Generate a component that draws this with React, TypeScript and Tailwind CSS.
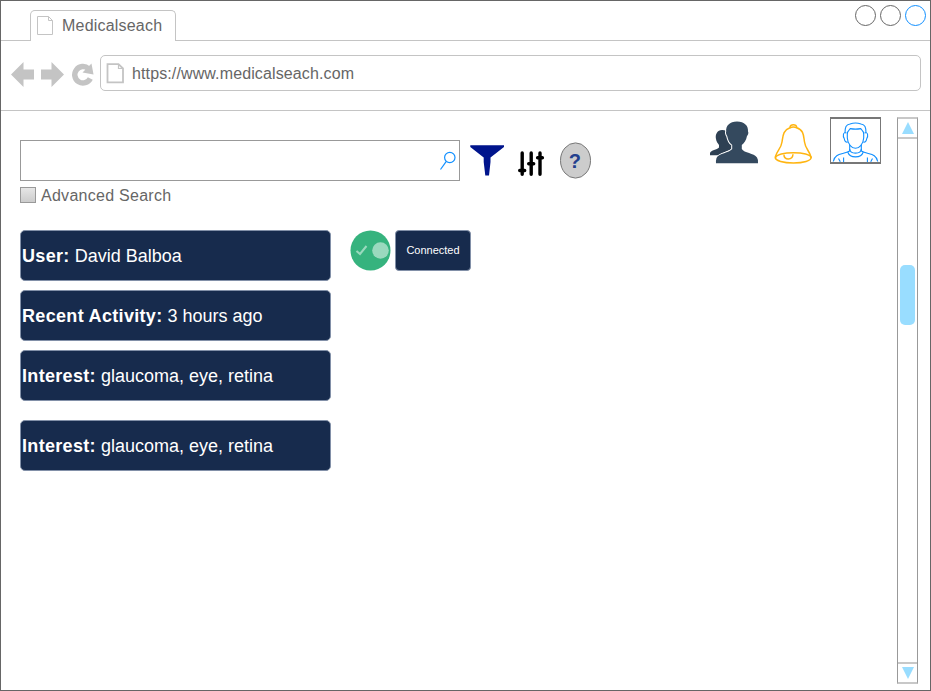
import React from "react";

function PageIcon({ thick = false }: { thick?: boolean }) {
  return thick ? (
    <svg className="h-[21px] w-[19px] shrink-0" viewBox="0 0 19 21" fill="none" stroke="#c4c4c4" strokeWidth="1.8">
      <path d="M1.5 1.2H12.5L17 5.5V19.3H1.5Z" />
      <path d="M12.5 1.2V5.5H17" strokeWidth="1.2" />
    </svg>
  ) : (
    <svg className="h-[20px] w-[17px] shrink-0" viewBox="0 0 17 20" fill="none" stroke="#c4c4c4">
      <path d="M.5 .5H11.5L15.5 4.5V18.5H.5Z" />
      <path d="M11.5 .5V4.5H15.5" />
    </svg>
  );
}

function TabBar() {
  return (
    <div className="flex h-[40px] items-end">
      <div className="w-[29px] shrink-0 border-b border-[#c4c4c4]" />
      <div className="flex h-[31px] w-[146px] shrink-0 items-center rounded-t-[5px] border border-b-0 border-[#c4c4c4] pl-[6px]">
        <PageIcon />
        <span className="ml-[8px] text-[16px] leading-5 tracking-[0.2px]">Medicalseach</span>
      </div>
      <div className="flex h-full flex-1 justify-end border-b border-[#c4c4c4] pr-[3px]">
        <svg className="mt-[3px] h-[23px] w-[73px]" viewBox="0 0 73 23" fill="none" stroke="#666">
          <circle cx="11.5" cy="11.5" r="10" />
          <circle cx="36.5" cy="11.5" r="10" />
          <circle cx="61.5" cy="11.5" r="10" stroke="#108fff" />
        </svg>
      </div>
    </div>
  );
}

function Toolbar() {
  return (
    <div className="flex h-[70px] border-b border-[#c4c4c4] pt-[14px] pr-[9px] pl-[10px]">
      <svg className="mt-[6px] h-[28px] w-[89px] shrink-0" viewBox="11 61 89 28" fill="#c4c4c4">
        <path d="M11 74.5L23.5 62V69.5H34V79.5H23.5V87Z" />
        <path d="M64 74.5L51.5 62V69.5H41V79.5H51.5V87Z" />
        <path d="M88.5 68.7A8.2 8.2 0 1 0 90.3 78.5" fill="none" stroke="#c4c4c4" strokeWidth="5.5" />
        <path d="M91.5 63.5L93.5 74.5L82.5 72.5Z" />
      </svg>
      <div className="flex h-[36px] flex-1 items-center rounded-[5px] border border-[#c4c4c4] pl-[5px]">
        <PageIcon thick />
        <span className="mt-[2px] ml-[7px] text-[16px] leading-5 tracking-[0.12px]">https://www.medicalseach.com</span>
      </div>
    </div>
  );
}

function SearchTools() {
  return (
    <div className="flex">
      <div className="flex h-[41px] w-[440px] items-center justify-end border border-[#999]">
        <svg className="mr-[2px] h-[20px] w-[18px]" viewBox="0 0 18 20" fill="none" stroke="#108fff" strokeWidth="1.2">
          <circle cx="10.8" cy="6.5" r="5.2" />
          <path d="M7.3 10.4L1.5 18.5" />
        </svg>
      </div>
      <svg className="ml-[9px] h-[41px] w-[124px]" viewBox="469 140 124 41">
        <path d="M470.3 145.3H504V147L490.5 157.5V162L489 175.5H485.3L483.7 162V157.5L470.3 147Z" fill="#00148c" />
        <g stroke="#000" strokeWidth="3.4" strokeLinecap="round">
          <path d="M522.2 153V174.3M531.2 153V174.3M540 153V174.3" />
          <path d="M519.7 170.5H524.7M528.7 163.8H533.7M537.6 157.8H542.4" />
        </g>
        <ellipse cx="575.5" cy="160.5" rx="15" ry="17.6" fill="#ccc" stroke="#777" />
        <text x="574.8" y="167.5" textAnchor="middle" fill="#23408e" fontSize="20" fontWeight="700">?</text>
      </svg>
    </div>
  );
}

function AccountIcons() {
  return (
    <div className="flex">
      <svg className="mt-[4px] h-[43px] w-[50px]" viewBox="709 121 50 43">
        <path d="M722.5 130C717.5 129.7 715.2 134 715.9 138.5C716.3 142 718 143.5 719 145V147.5C717 150 711 150 710 153V155.3H718L732 149V130.5C729 132 726 130.3 722.5 130Z" fill="#2e4053" />
        <path d="M737 121.6C729.5 121.6 725.7 126 726.2 131.5C725.6 132.5 726.3 135 727.2 136C728 140.5 730 143.5 732.2 145V149C729 153 719 153 716.5 158Q715.7 161 716 163.3H758Q758.5 160 757 157.5C754 153 744 153 741.8 149V145C744 143.5 746.3 140 747 136C748.2 135 748.8 132.5 748 131.5C748.5 126 744.5 121.6 737 121.6Z" fill="#34495e" stroke="#fff" strokeWidth="2" paintOrder="stroke" />
      </svg>
      <svg className="mt-[6px] ml-[14px] h-[42px] w-[41px]" viewBox="773 123 41 42" fill="none" stroke="#ffb511" strokeWidth="1.5">
        <path d="M790 127.7C789.7 123.7 797 123.7 796.7 127.7C804 130 803.5 136 804.5 142C805.5 149 809 150 811 157C813 165 774 165 775.3 157C777 150 781 149 782 142C783 136 783 130 790 127.7Z" />
        <path d="M775.5 158C776 151 811 151 811.3 158M784 154.8C783.5 160 792.5 161 793 154.3" />
        <path d="M790 127.7Q793.4 126.5 796.7 127.7" />
      </svg>
      <div className="ml-[16px] h-[47px] w-[51px] border border-y-2 border-[#777]">
        <svg className="h-[43px] w-[49px]" viewBox="831 119 49 43" fill="none" stroke="#108fff" strokeWidth="1.1">
          <path d="M845 133C845 127 846 124.8 850 124C853.5 122.8 857.5 122.8 861 124C865 124.8 866 127 866 133" />
          <path d="M847.3 134C847 131 849.5 130 850.3 128.6C853.5 129.2 857.5 129.2 860.7 128.6C861.5 130 864 131 863.7 134V138C863.3 144.5 859 148.3 855.5 148.3C852 148.3 847.7 144.5 847.3 138Z" />
          <path d="M846.5 133C842.8 131.5 842.8 136 844.2 138.5C844.7 141 845.5 142.5 847.7 142M864.5 133C868.2 131.5 868.2 136 866.8 138.5C866.3 141 865.5 142.5 863.3 142" />
          <path d="M849.7 145V151C843 155 835 152.5 833.3 161.5M861.3 145V151C868 155 876 152.5 877.7 161.5" />
          <path d="M849.7 149C850 154.5 861 154.5 861.3 149M847.7 152C850 158.5 861 158.5 863.3 152M838.5 158.5L840.3 161.8M872.5 158.5L870.7 161.8M843.6 157.5V162M867.4 157.5V162" />
        </svg>
      </div>
    </div>
  );
}

function Card({ label, value }: { label: string; value: string }) {
  return (
    <div className="flex h-[51px] w-[311px] items-center rounded-[5px] border border-[#8290a8] bg-[#172b4d] pl-px text-[18px] leading-5 text-white">
      <p><b className="tracking-[0.32px]">{label}</b> {value}</p>
    </div>
  );
}

function ScrollBar() {
  return (
    <div className="mt-[6px] mr-[12px] flex h-[567px] w-[21px] shrink-0 flex-col items-center border-x border-y-2 border-x-[#999] border-y-[#c8c8c8]">
      <div className="flex h-[20px] w-full items-center justify-center border-b-2 border-[#c8c8c8]">
        <svg className="h-3 w-3" viewBox="0 0 12 12"><path d="M6 0L12 12H0Z" fill="#99ddff" /></svg>
      </div>
      <div className="flex w-full flex-1 justify-center pt-[126px]">
        <div className="h-[60px] w-[15px] rounded-[5px] bg-[#99ddff]" />
      </div>
      <div className="flex h-[20px] w-full items-center justify-center border-t-2 border-[#c8c8c8]">
        <svg className="h-3 w-3" viewBox="0 0 12 12"><path d="M0 0H12L6 12Z" fill="#99ddff" /></svg>
      </div>
    </div>
  );
}

export default function App() {
  return (
    <div className="flex h-[691px] w-[931px] flex-col border border-[#666] bg-white font-['Liberation_Sans',Arial,sans-serif] text-[#666]">
      <TabBar />
      <Toolbar />
      <div className="flex flex-1">
        <main className="flex-1 pl-[19px]">
          <div className="flex h-[119px] justify-between pr-[16px]">
            <div className="pt-[29px]">
              <SearchTools />
              <label className="mt-[6px] flex h-[16px] items-center">
                <input type="checkbox" className="h-[16px] w-[16px] appearance-none border border-[#999] bg-linear-to-b from-[#e6e6e6] to-[#ccc]" />
                <span className="mt-[2px] ml-[5px] text-[16px] leading-5 tracking-[0.27px]">Advanced Search</span>
              </label>
            </div>
            <div className="pt-[6px]"><AccountIcons /></div>
          </div>
          <div className="flex">
            <div className="flex flex-col gap-[9px]">
              <Card label="User:" value="David Balboa" />
              <Card label="Recent Activity:" value="3 hours ago" />
              <Card label="Interest:" value="glaucoma, eye, retina" />
              <div className="mt-[10px]"><Card label="Interest:" value="glaucoma, eye, retina" /></div>
            </div>
            <svg className="ml-[19px] h-[41px] w-[41px]" viewBox="350 230 41 41">
              <circle cx="370.5" cy="250.5" r="20" fill="#36b37e" />
              <circle cx="380.5" cy="250.5" r="8.3" fill="#9ad9be" />
              <path d="M356.5 251L360 254L366.5 246" fill="none" stroke="#9ad9be" strokeWidth="2" />
            </svg>
            <div className="ml-[4px] flex h-[41px] w-[76px] items-center justify-center rounded-[4px] border border-[#8290a8] bg-[#172b4d] text-[11px] text-white">Connected</div>
          </div>
        </main>
        <ScrollBar />
      </div>
    </div>
  );
}
